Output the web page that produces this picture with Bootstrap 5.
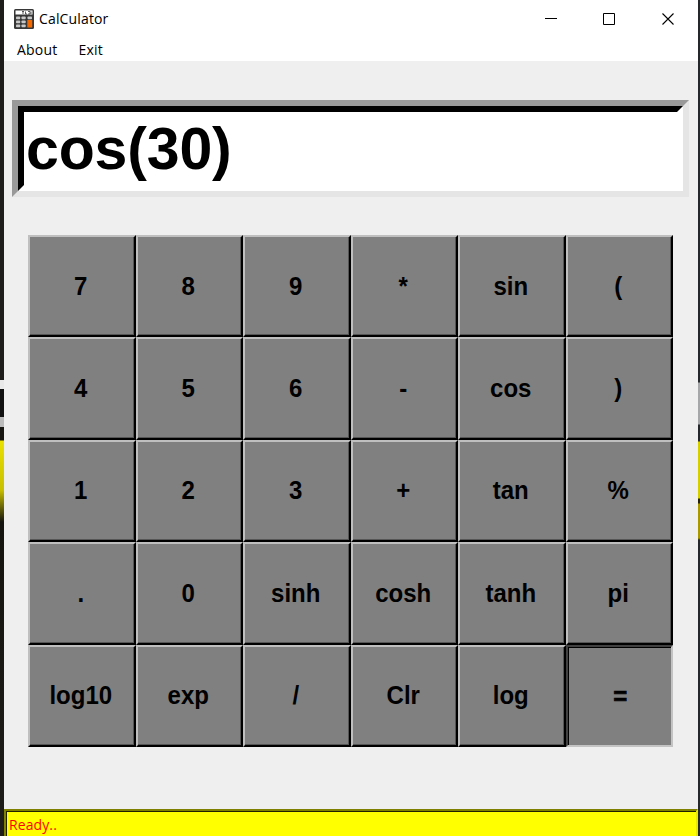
<!DOCTYPE html>
<html lang="en">
<head>
<meta charset="utf-8">
<title>CalCulator</title>
<link href="https://cdn.jsdelivr.net/npm/bootstrap@5.3.0/dist/css/bootstrap.min.css" rel="stylesheet">
<style>
body{width:700px;height:836px;overflow:hidden;background:#1e1d1b;font-family:"Open Sans","Noto Sans",sans-serif;color:#000}
.edge-l{width:4px;background:linear-gradient(#1e1d1b 0 380px,#e8e8e8 380px 389px,#111 389px 417px,#bbb 417px 427px,#171611 427px 440px,#e9e100 441px,#c9c000 490px,#15140e 522px,#1e1d1b)}
.edge-r{width:2px;background:linear-gradient(#25282a 0 382px,#a5a7a9 383px 424px,#25282a 425px 441px,#d5cf00 442px 498px,#22210c 499px 503px,#aa9800 504px 538px,#25282a 540px)}
.app-window{background:#efefef}
.title-bar{height:38px;padding-left:10px}
.title-bar .caption{font-size:14px;letter-spacing:.15px;margin-left:5px;line-height:20px}
.win-btn{width:59px;height:38px}
.menu-strip{height:23px;padding-left:13px;font-size:14px;letter-spacing:.2px;gap:21px;line-height:24px}
.screen-outer{margin:39px 9px 0 8px;height:97px;border:6px solid;border-color:#999 #e5e5e5 #e5e5e5 #999}
.screen-inner{height:85px;border:6px solid;border-color:#000 #fff #fff #000;font:bold 59px/75px "Liberation Sans",Arial,sans-serif;letter-spacing:-.15px;padding-left:2px;background:#fff}
.keys{margin:38px 25px 0 24px;height:512px;display:grid;grid-template:repeat(5,1fr)/repeat(6,1fr)}
.key{border:2px solid;border-color:#bfbfbf #000 #000 #bfbfbf;background:#808080;box-shadow:inset -1px -1px #555;font:bold 24px/1 "Liberation Sans",Arial,sans-serif;color:#000}
.key span{transform:scaleY(1.07);margin:-1px 2px 0 0}
.key.pressed{border-color:#404040 #c3c3c3 #c3c3c3 #404040;box-shadow:inset 1px 1px #000}
.key.pressed span{margin:1px 0 0 2px;-webkit-text-stroke:.6px #000}
.status{height:27px;background:#ff0;border:solid;border-width:2px 2px 0 2px;border-color:#808000 #e8e800 #ff0 #808000;box-shadow:inset 1px 1px #202000;color:#f00;font-size:14px;letter-spacing:.1px;line-height:27px;padding-left:3px}
</style>
<script src="https://cdn.jsdelivr.net/npm/bootstrap@5.3.0/dist/js/bootstrap.bundle.min.js"></script>
</head>
<body class="d-flex m-0">
<div class="edge-l flex-shrink-0"></div>
<main class="app-window d-flex flex-column flex-grow-1">
  <header class="title-bar bg-white d-flex align-items-center">
    <svg width="20" height="20" viewBox="0 0 20 20">
      <rect width="20" height="20" rx="1.5" fill="#373737"/>
      <rect x="1.5" y="1.5" width="17" height="4" fill="#fff"/>
      <path d="M8 2.5h2M9 2.5v2.5M11.5 2.5v2.5h1.5M14 2.5h2v2.5h-2M17 2.5v2.5" stroke="#333" stroke-width=".8" fill="none"/>
      <g fill="#c8c8c8"><rect x="2" y="7.5" width="4.2" height="2.7" rx=".8"/><rect x="7.5" y="7.5" width="4.2" height="2.7" rx=".8"/><rect x="13.5" y="7.5" width="4.5" height="2.7" rx=".8"/><rect x="2" y="11.5" width="4.2" height="2.7" rx=".8"/><rect x="7.5" y="11.5" width="4.2" height="2.7" rx=".8"/><rect x="2" y="15.5" width="4.2" height="2.7" rx=".8"/><rect x="7.5" y="15.5" width="4.2" height="2.7" rx=".8"/></g>
      <rect x="13.3" y="11" width="4.9" height="7.5" rx=".5" fill="#f56a00"/>
    </svg>
    <span class="caption me-auto">CalCulator</span>
    <div class="d-flex">
      <svg class="win-btn" viewBox="0 0 59 38"><path d="M24 18.5h12" stroke="#000"/></svg>
      <svg class="win-btn" viewBox="0 0 59 38"><path d="M23.5 13.5h11v11h-11z" stroke="#000" fill="none"/></svg>
      <svg class="win-btn" viewBox="0 0 59 38"><path d="M23.5 13.5l11 11M34.5 13.5l-11 11" stroke="#000" stroke-width="1.1"/></svg>
    </div>
  </header>
  <nav class="menu-strip bg-white d-flex"><span>About</span><span>Exit</span></nav>
  <div class="screen-outer"><div class="screen-inner">cos(30)</div></div>
  <section class="keys">
    <button class="key p-0 d-flex align-items-center justify-content-center"><span>7</span></button>
    <button class="key p-0 d-flex align-items-center justify-content-center"><span>8</span></button>
    <button class="key p-0 d-flex align-items-center justify-content-center"><span>9</span></button>
    <button class="key p-0 d-flex align-items-center justify-content-center"><span>*</span></button>
    <button class="key p-0 d-flex align-items-center justify-content-center"><span>sin</span></button>
    <button class="key p-0 d-flex align-items-center justify-content-center"><span>(</span></button>
    <button class="key p-0 d-flex align-items-center justify-content-center"><span>4</span></button>
    <button class="key p-0 d-flex align-items-center justify-content-center"><span>5</span></button>
    <button class="key p-0 d-flex align-items-center justify-content-center"><span>6</span></button>
    <button class="key p-0 d-flex align-items-center justify-content-center"><span>-</span></button>
    <button class="key p-0 d-flex align-items-center justify-content-center"><span>cos</span></button>
    <button class="key p-0 d-flex align-items-center justify-content-center"><span>)</span></button>
    <button class="key p-0 d-flex align-items-center justify-content-center"><span>1</span></button>
    <button class="key p-0 d-flex align-items-center justify-content-center"><span>2</span></button>
    <button class="key p-0 d-flex align-items-center justify-content-center"><span>3</span></button>
    <button class="key p-0 d-flex align-items-center justify-content-center"><span>+</span></button>
    <button class="key p-0 d-flex align-items-center justify-content-center"><span>tan</span></button>
    <button class="key p-0 d-flex align-items-center justify-content-center"><span>%</span></button>
    <button class="key p-0 d-flex align-items-center justify-content-center"><span>.</span></button>
    <button class="key p-0 d-flex align-items-center justify-content-center"><span>0</span></button>
    <button class="key p-0 d-flex align-items-center justify-content-center"><span>sinh</span></button>
    <button class="key p-0 d-flex align-items-center justify-content-center"><span>cosh</span></button>
    <button class="key p-0 d-flex align-items-center justify-content-center"><span>tanh</span></button>
    <button class="key p-0 d-flex align-items-center justify-content-center"><span>pi</span></button>
    <button class="key p-0 d-flex align-items-center justify-content-center"><span>log10</span></button>
    <button class="key p-0 d-flex align-items-center justify-content-center"><span>exp</span></button>
    <button class="key p-0 d-flex align-items-center justify-content-center"><span>/</span></button>
    <button class="key p-0 d-flex align-items-center justify-content-center"><span>Clr</span></button>
    <button class="key p-0 d-flex align-items-center justify-content-center"><span>log</span></button>
    <button class="key pressed p-0 d-flex align-items-center justify-content-center"><span>=</span></button>
  </section>
  <footer class="status mt-auto">Ready..</footer>
</main>
<div class="edge-r flex-shrink-0"></div>
</body>
</html>
